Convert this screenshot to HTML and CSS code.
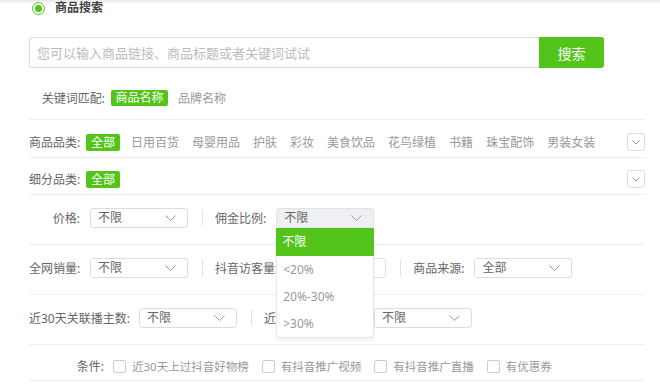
FILE: index.html
```html
<!DOCTYPE html>
<html lang="zh-CN">
<head>
<meta charset="UTF-8" />
<title>商品搜索</title>
<link rel="stylesheet" href="styles.css">
</head>
<body>
	<div class="page">
		<div class="panel">
			<!-- 标题 -->
			<div class="head">
				<span class="radio"><i></i></span>
				<span class="head-title">商品搜索</span>
			</div>

			<!-- 搜索框 -->
			<div class="search">
				<input class="search-input" type="text" placeholder="您可以输入商品链接、商品标题或者关键词试试" />
				<button class="search-btn">搜索</button>
			</div>

			<div class="row row-kw">
				<span class="label label-kw">关键词匹配:</span>
				<span class="tag">商品名称</span>
				<span class="opt opt-kw">品牌名称</span>
			</div>

			<div class="row row-tags">
				<span class="label">商品品类:</span>
				<span class="tag tag-all">全部</span>
				<span class="opt">日用百货</span>
				<span class="opt">母婴用品</span>
				<span class="opt">护肤</span>
				<span class="opt">彩妆</span>
				<span class="opt">美食饮品</span>
				<span class="opt">花鸟绿植</span>
				<span class="opt">书籍</span>
				<span class="opt">珠宝配饰</span>
				<span class="opt">男装女装</span>
				<span class="toggle"><svg width="8" height="5" viewBox="0 0 8 5"><polyline points="0.5,0.5 4,4 7.5,0.5" fill="none" stroke="#999" stroke-width="1"/></svg></span>
			</div>

			<div class="row row-tags row-sub">
				<span class="label">细分品类:</span>
				<span class="tag tag-all">全部</span>
				<span class="toggle"><svg width="8" height="5" viewBox="0 0 8 5"><polyline points="0.5,0.5 4,4 7.5,0.5" fill="none" stroke="#999" stroke-width="1"/></svg></span>
			</div>

			<div class="row row-sel">
				<span class="label">价格:</span>
				<span class="select">不限<svg width="11" height="6" viewBox="0 0 11 6"><polyline points="0.5,0.5 5.5,5.5 10.5,0.5" fill="none" stroke="#999" stroke-width="1"/></svg></span>
				<span class="sep"></span>
				<span class="label-free">佣金比例:</span>
				<span class="select select-open">不限<svg width="11" height="6" viewBox="0 0 11 6"><polyline points="0.5,0.5 5.5,5.5 10.5,0.5" fill="none" stroke="#999" stroke-width="1"/></svg>
					<span class="menu">
						<span class="menu-item menu-item-on">不限</span>
						<span class="menu-item">&lt;20%</span>
						<span class="menu-item">20%-30%</span>
						<span class="menu-item">&gt;30%</span>
					</span>
				</span>
			</div>

			<div class="row row-sel">
				<span class="label">全网销量:</span>
				<span class="select">不限<svg width="11" height="6" viewBox="0 0 11 6"><polyline points="0.5,0.5 5.5,5.5 10.5,0.5" fill="none" stroke="#999" stroke-width="1"/></svg></span>
				<span class="sep"></span>
				<span class="label-free">抖音访客量:</span>
				<span class="select">不限<svg width="11" height="6" viewBox="0 0 11 6"><polyline points="0.5,0.5 5.5,5.5 10.5,0.5" fill="none" stroke="#999" stroke-width="1"/></svg></span>
				<span class="sep"></span>
				<span class="label-free">商品来源:</span>
				<span class="select">全部<svg width="11" height="6" viewBox="0 0 11 6"><polyline points="0.5,0.5 5.5,5.5 10.5,0.5" fill="none" stroke="#999" stroke-width="1"/></svg></span>
			</div>

			<div class="row row-sel">
				<span class="label-free label-wide">近30天关联播主数:</span>
				<span class="select">不限<svg width="11" height="6" viewBox="0 0 11 6"><polyline points="0.5,0.5 5.5,5.5 10.5,0.5" fill="none" stroke="#999" stroke-width="1"/></svg></span>
				<span class="sep"></span>
				<span class="label-free label-wide">近30天关联视频数:</span>
				<span class="select">不限<svg width="11" height="6" viewBox="0 0 11 6"><polyline points="0.5,0.5 5.5,5.5 10.5,0.5" fill="none" stroke="#999" stroke-width="1"/></svg></span>
			</div>

			<div class="row row-check">
				<span class="label label-cond">条件:</span>
				<span class="check"><i></i>近30天上过抖音好物榜</span>
				<span class="check"><i></i>有抖音推广视频</span>
				<span class="check"><i></i>有抖音推广直播</span>
				<span class="check"><i></i>有优惠券</span>
			</div>
		</div>
	</div>
</body>
</html>
```

FILE: styles.css
```css
body {margin: 0; background: #fff; font-family: "Noto Sans", "Noto Sans CJK SC", sans-serif; font-size: 12px; line-height: 17px; color: #666;}
.page {background: linear-gradient(#e9e9e9, #fff 4px); height: 385px; overflow: hidden;}
.panel {margin-left: 29px; width: 616px;}

/* 标题 */
.head {display: flex; align-items: center; height: 16px; padding-left: 3px;}
.radio {width: 11px; height: 11px; border: 1px solid #52c41a; border-radius: 50%; display: flex; align-items: center; justify-content: center; margin-right: 10px;}
.radio i {width: 7px; height: 7px; border-radius: 50%; background: #52c41a;}
.head-title {color: #444; font-weight: bold; line-height: 16px;}

/* 搜索框 */
.search {display: flex; margin-top: 21px; height: 31px;}
.search-input {box-sizing: border-box; width: 510px; height: 31px; margin: 0; padding: 0 7px; border: 1px solid #ddd; border-right: 0; border-radius: 3px 0 0 3px; font-family: inherit; font-size: 13px; color: #666; outline: none;}
.search-input::placeholder {color: #bbb;}
.search-btn {width: 65px; height: 31px; margin: 0; padding: 0; border: 0; border-radius: 0 3px 3px 0; background: #52c41a; color: #fff; font-family: inherit; font-size: 14px;}

/* 通用行 */
.row {display: flex; align-items: center; border-bottom: 1px solid #eee;}
.label {width: 51px; text-align: right; flex: none; white-space: nowrap;}
.label-free {flex: none; white-space: nowrap; margin-right: 10px;}
.label-wide {width: 100px;}
.tag {background: #52c41a; color: #fff; border-radius: 2px; padding: 0 5px; line-height: 17px; white-space: nowrap;}
.opt {color: #999; padding: 0 6px; margin-right: 1px; white-space: nowrap;}

.row-kw {padding: 22px 0 13px; height: 16px;}
.row-kw .tag {line-height: 16px; padding: 0 4.5px;}
.label-kw {width: 76px; margin-right: 6px;}
.opt-kw {margin-left: 4px;}

.row-tags {padding: 13px 0 6px; height: 18px;}
.row-sub {padding-top: 12px;}
.row-tags .label {margin-right: 6px;}
.tag-all {margin-right: 5px;}
.toggle {margin-left: auto; box-sizing: border-box; width: 18px; height: 18px; border: 1px solid #ddd; border-radius: 3px; display: flex; align-items: center; justify-content: center;}

.row-sel {padding: 13px 0 16px; height: 20px;}
.row-sel .label {margin-right: 10px;}
.select {position: relative; box-sizing: border-box; width: 98px; height: 20px; padding: 0 11px 0 7px; border: 1px solid #ddd; border-radius: 3px; display: flex; align-items: center; justify-content: space-between; flex: none; line-height: 18px; color: #666;}
.select-open {background: #eef0f3; border-color: #e2e4e8;}
.sep {width: 1px; height: 16px; background: #e2e2e2; margin: 0 12px 0 14px; flex: none;}

/* 下拉菜单 */
.menu {position: absolute; top: 19px; left: -1px; width: 98px; box-sizing: border-box; background: #fff; border: 1px solid #e6e6e6; border-top: 0; border-radius: 0 0 3px 3px; box-shadow: 0 2px 4px rgba(0, 0, 0, 0.06); z-index: 5;}
.menu-item {display: block; height: 27px; line-height: 27px; padding-left: 6px; color: #999;}
.menu-item-on {background: #52c41a; color: #fff; height: 28px; line-height: 28px; margin: 0 -1px;}

/* 条件 */
.row-check {padding: 14px 0 7px; height: 14px;}
.label-cond {width: 75px; margin-right: 9px;}
.check {display: flex; align-items: center; color: #999; font-size: 11.5px; margin-right: 13px; white-space: nowrap;}
.check i {box-sizing: border-box; width: 13px; height: 13px; border: 1px solid #ccc; border-radius: 2px; margin-right: 6px;}
```
